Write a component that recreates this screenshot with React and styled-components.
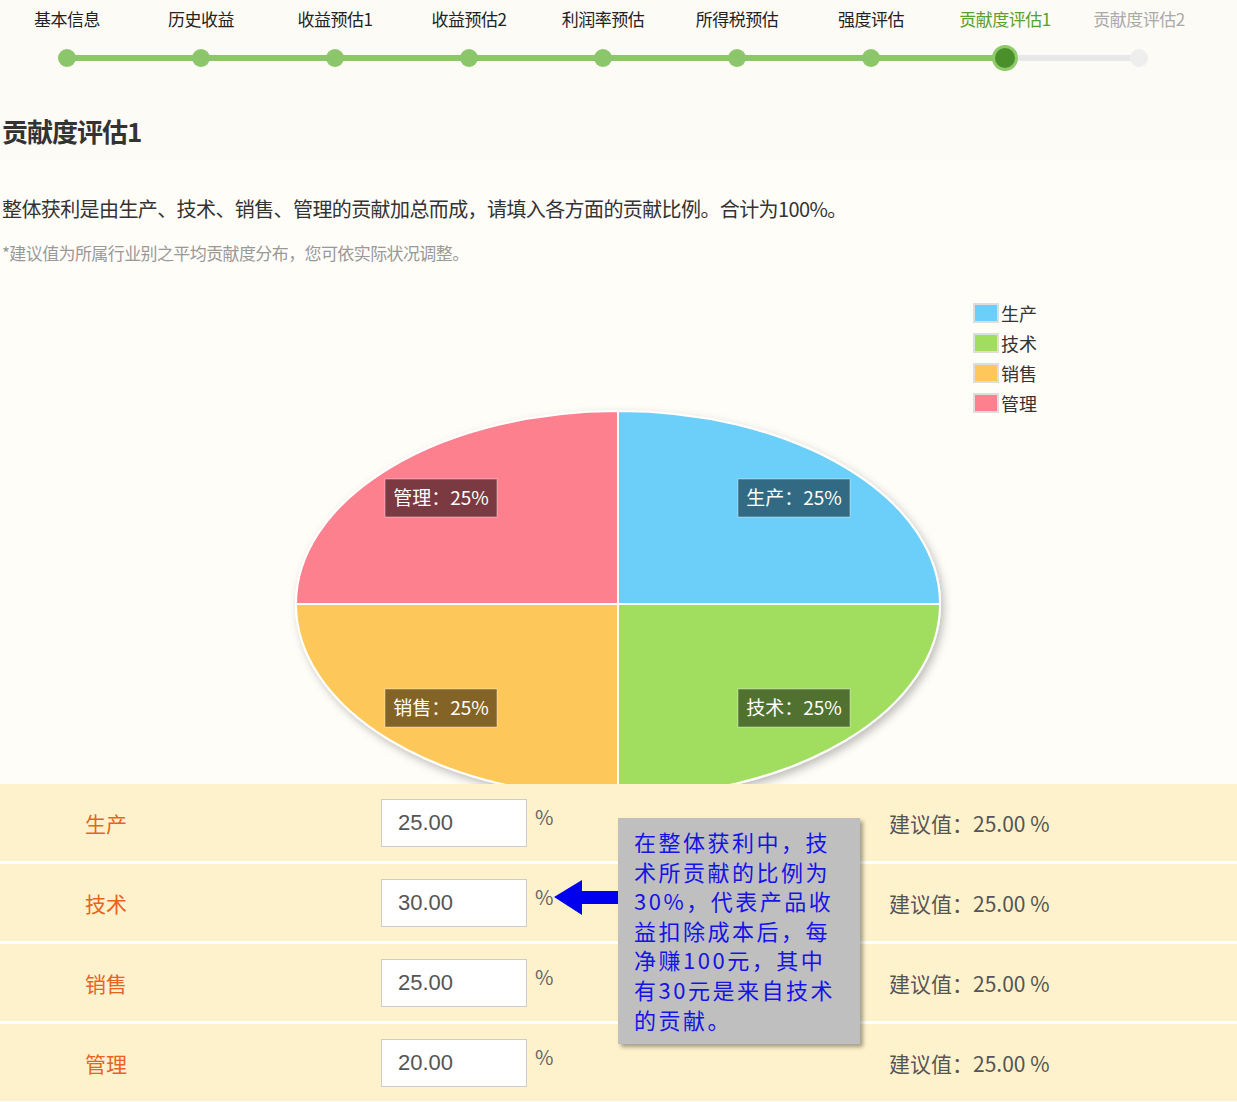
import React from "react";
import styled, { createGlobalStyle } from "styled-components";

const G = createGlobalStyle`
  body{margin:0;background:#fffdf8;font-family:"Noto Sans CJK SC","Liberation Sans",sans-serif;}
`;
const Page = styled.div`width:1237px;height:1102px;position:relative;overflow:hidden;`;
const Top = styled.div`background:#fdfbf5;height:160px;`;
const Steps = styled.div`display:grid;grid-template-columns:repeat(9,134px);padding-left:0;`;
const Step = styled.div`display:flex;flex-direction:column;align-items:center;position:relative;`;
const StepLabel = styled.div`font-size:17px;height:40px;line-height:38px;color:${p=>p.c};letter-spacing:-0.5px;`;
const Track = styled.div`position:relative;height:36px;width:100%;display:flex;align-items:center;justify-content:center;`;
const Line = styled.div`position:absolute;top:15px;height:6px;left:${p=>p.l};right:${p=>p.r};background:${p=>p.c};`;
const Dot = styled.div`width:${p=>p.s}px;height:${p=>p.s}px;border-radius:50%;background:${p=>p.c};position:relative;z-index:1;box-shadow:${p=>p.ring?"0 0 0 3px #8dcb6a":"none"};`;
const Title = styled.h1`margin:0;padding:36px 0 0 2px;font-size:26px;font-weight:bold;color:#333;letter-spacing:-1px;`;
const Desc = styled.p`margin:34px 0 0 2px;font-size:20px;color:#333;letter-spacing:-0.6px;`;
const Note = styled.p`margin:17px 0 0 2px;font-size:17px;color:#999;letter-spacing:-0.6px;`;
const Chart = styled.div`position:relative;height:489px;margin-top:30px;overflow:hidden;`;
const Legend = styled.div`position:absolute;left:973px;top:6px;display:flex;flex-direction:column;gap:7px;`;
const LegItem = styled.div`display:flex;align-items:center;font-size:18px;color:#333;height:23px;`;
const Sw = styled.span`width:22px;height:16px;background:${p=>p.c};border:2px solid #ddd;margin-right:2px;`;
const Table = styled.div`display:flex;flex-direction:column;gap:3px;background:#fff;`;
const Row = styled.div`display:grid;grid-template-columns:381px 146px 362px 1fr;align-items:center;height:77px;background:#fdf2cc;`;
const Name = styled.div`padding-left:85px;color:#e8641e;font-size:21px;`;
const Input = styled.div`height:46px;border:1px solid #ccc;background:#fff;font-size:22px;color:#555;display:flex;align-items:center;padding-left:16px;font-family:"Liberation Sans",sans-serif;`;
const Pct = styled.div`font-size:20px;color:#666;align-self:start;padding:18px 0 0 8px;`;
const Sug = styled.div`font-size:21px;color:#555;`;
const Tip = styled.div`position:absolute;left:618px;top:818px;width:226px;height:207px;box-sizing:content-box;background:#bfbfbf;box-shadow:3px 3px 4px rgba(0,0,0,.35);padding:9px 0 10px 16px;font-size:22px;line-height:29.6px;letter-spacing:2.5px;color:#1414e6;font-family:"Noto Sans CJK SC",sans-serif;`;
const TipText = styled.div`width:212px;`;
const Arrow = styled.svg`position:absolute;left:552px;top:878px;`;

const steps=["基本信息","历史收益","收益预估1","收益预估2","利润率预估","所得税预估","强度评估","贡献度评估1","贡献度评估2"];
const rows=[["生产","25.00"],["技术","30.00"],["销售","25.00"],["管理","20.00"]];

function Lbl({x,y,t,bg}){return <g><rect x={x} y={y} width="112" height="38" fill={bg} stroke="#fff" strokeOpacity=".4"/><text x={x+56} y={y+26} textAnchor="middle" fontSize="19" fill="#fff" fontFamily="Noto Sans CJK SC,sans-serif">{t}</text></g>}

export default function App(){
  const cx=618,cy=309,rx=322,ry=193;
  return <Page><G/>
    <Top>
      <Steps>{steps.map((s,i)=>{
        const done=i<7,cur=i===7;
        const col=i<7?"#222":cur?"#5aa02c":"#aaa";
        return <Step key={s}><StepLabel c={col}>{s}</StepLabel>
          <Track>
            {i>0&&<Line l="0" r="50%" c={i<=7?"#8cc66a":"#e8e8e8"}/>}
            {i<8&&<Line l="50%" r="0" c={i<7?"#8cc66a":"#e8e8e8"}/>}
            <Dot s={cur?20:18} ring={cur} c={done?"#8cc66a":cur?"#4a8f2a":"#eee"}/>
          </Track></Step>})}
      </Steps>
      <Title>贡献度评估1</Title>
    </Top>
    <Desc>整体获利是由生产、技术、销售、管理的贡献加总而成，请填入各方面的贡献比例。合计为100%。</Desc>
    <Note>*建议值为所属行业别之平均贡献度分布，您可依实际状况调整。</Note>
    <Chart>
      <svg width="1237" height="520">
        <defs><filter id="sh"><feDropShadow dx="3" dy="4" stdDeviation="4" floodOpacity=".25"/></filter></defs>
        <g filter="url(#sh)">
        <path d={`M${cx},${cy} L${cx+rx},${cy} A${rx},${ry} 0 0 0 ${cx},${cy-ry}Z`} fill="#6ccff9" stroke="#fff" strokeWidth="2"/>
        <path d={`M${cx},${cy} L${cx},${cy-ry} A${rx},${ry} 0 0 0 ${cx-rx},${cy}Z`} fill="#fd808f" stroke="#fff" strokeWidth="2"/>
        <path d={`M${cx},${cy} L${cx-rx},${cy} A${rx},${ry} 0 0 0 ${cx},${cy+ry}Z`} fill="#fec75a" stroke="#fff" strokeWidth="2"/>
        <path d={`M${cx},${cy} L${cx},${cy+ry} A${rx},${ry} 0 0 0 ${cx+rx},${cy}Z`} fill="#a1de5e" stroke="#fff" strokeWidth="2"/>
        </g>
        <Lbl x={385} y={184} t="管理：25%" bg="rgba(90,40,45,.8)"/>
        <Lbl x={738} y={184} t="生产：25%" bg="rgba(35,80,100,.8)"/>
        <Lbl x={385} y={394} t="销售：25%" bg="rgba(100,75,25,.8)"/>
        <Lbl x={738} y={394} t="技术：25%" bg="rgba(60,85,35,.8)"/>
      </svg>
      <Legend>
        <LegItem><Sw c="#6ccff9"/>生产</LegItem>
        <LegItem><Sw c="#a1de5e"/>技术</LegItem>
        <LegItem><Sw c="#fec75a"/>销售</LegItem>
        <LegItem><Sw c="#fd808f"/>管理</LegItem>
      </Legend>
    </Chart>
    <Table>{rows.map(([n,v])=><Row key={n}><Name>{n}</Name><Input>{v}</Input><Pct>%</Pct><Sug>建议值：25.00 %</Sug></Row>)}</Table>
    <Arrow width="70" height="40" viewBox="0 0 70 40"><path d="M2,19 L30,2 L30,13 L66,13 L66,26 L30,26 L30,37Z" fill="#0000ee"/></Arrow>
    <Tip><TipText>在整体获利中，技术所贡献的比例为30%，代表产品收益扣除成本后，每净赚100元，其中有30元是来自技术的贡献。</TipText></Tip>
  </Page>;
}
